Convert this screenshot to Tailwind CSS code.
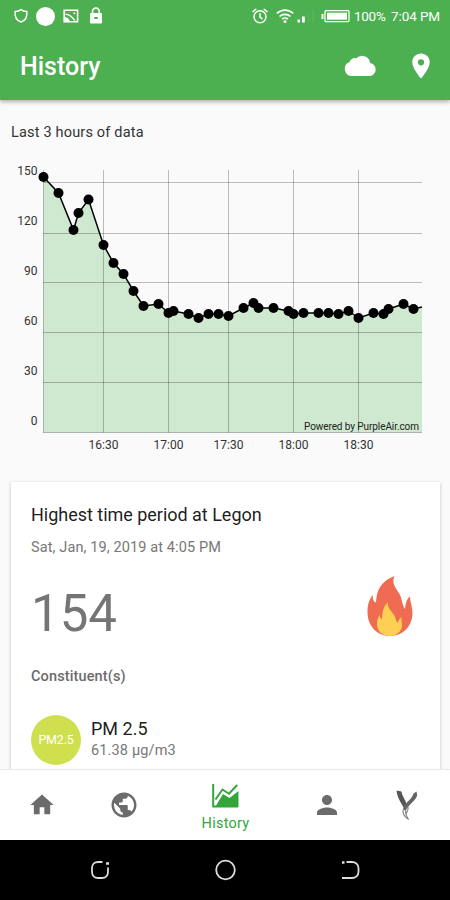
<!DOCTYPE html>
<html lang="en">
<head>
    <meta charset="UTF-8">
    <meta name="viewport" content="width=device-width, initial-scale=1.0">
    <title>History</title>
    <script src="https://cdn.jsdelivr.net/npm/@tailwindcss/browser@4"></script>
</head>
<body class="bg-[#fafafa] font-[Roboto,sans-serif]">
    <div class="flex h-[900px] w-[450px] flex-col overflow-hidden">

        <header class="z-10 h-[100px] shrink-0 bg-[#4caf50] text-white shadow-[0_2px_4px_rgba(0,0,0,0.3)]">
            <!-- Status bar -->
            <div class="flex h-8 items-center justify-between pr-[10px] pl-[13px]">
                <div class="flex items-center">
                    <svg class="h-4 w-4" viewBox="0 0 16 16" fill="none" stroke="currentColor" stroke-width="1.5">
                        <path d="M8 1.500C6.500 3 4.500 3.500 2.200 3.500C1.500 8.500 3.500 12.300 8 14C12.500 12.300 14.500 8.500 13.800 3.500C11.500 3.500 9.500 3 8 1.500Z" />
                    </svg>
                    <span class="ml-[7px] size-[19px] rounded-full bg-white"></span>
                    <svg class="ml-2 h-[14px] w-4" viewBox="0 0 16 14" fill="none" stroke="currentColor" stroke-width="1.6">
                        <path d="M1.200 1.200h13.400v11.500H1.200z" />
                        <path d="M2.500 5.200c4.500 0 7 3 9.300 6.300" />
                        <path d="M2 8c2.500.3 4 1.500 5 4.500H2Z" fill="currentColor" stroke="none" />
                        <circle cx="11.300" cy="4.300" r="1" fill="currentColor" stroke="none" />
                    </svg>
                    <svg class="mt-[-2px] ml-[10px] h-[17px] w-[14px]" viewBox="0 0 14 17">
                        <path d="M3.500 7V4.500a3.400 3.400 0 0 1 6.800 0V7" fill="none" stroke="currentColor" stroke-width="1.600" />
                        <rect x="1" y="6" width="12" height="10.500" rx="1" fill="currentColor" />
                        <rect x="5" y="10" width="4" height="2" rx="1" fill="#4caf50" />
                    </svg>
                </div>
                <div class="flex items-center">
                    <svg class="h-4 w-4" viewBox="0 0 16 16" fill="none" stroke="currentColor" stroke-width="1.500" stroke-linecap="round">
                        <circle cx="8" cy="8.800" r="6" />
                        <path d="M8 5.800v3.300l2 1.500M1 3.600l2.800-2.400M15 3.600l-2.800-2.400" />
                    </svg>
                    <svg class="ml-2 h-4 w-[18px]" viewBox="0 0 18 16" fill="none" stroke="currentColor" stroke-width="1.700">
                        <path d="M.8 5.400a11.800 11.800 0 0 1 16.400 0M3.500 8.500a8 8 0 0 1 11 0M6 11.200a4.400 4.400 0 0 1 6 0" />
                        <circle cx="9" cy="13.500" r="1.500" fill="currentColor" stroke="none" />
                    </svg>
                    <svg class="ml-[3px] h-4 w-[20px]" viewBox="0 0 20 16" fill="currentColor">
                        <rect x="0.500" y="11.500" width="2.500" height="3" />
                        <rect x="5" y="8.500" width="2.800" height="6" />
                        <rect x="10.500" y="5" width="2.500" height="9.500" opacity="0.060" />
                        <rect x="15" y="1.500" width="2.500" height="13" opacity="0.060" />
                    </svg>
                    <svg class="mr-px ml-[4px] h-[14px] w-[29px]" viewBox="0 0 29 14">
                        <rect x="0.500" y="5" width="2" height="5" fill="currentColor" />
                        <rect x="4" y="1.700" width="24" height="11" rx="1" fill="none" stroke="currentColor" stroke-width="1.300" />
                        <rect x="6" y="3.700" width="20" height="7" fill="currentColor" />
                    </svg>
                    <span class="ml-[3px] w-8 text-[13.500px] whitespace-nowrap tracking-[-0.300px]">100%</span>
                    <span class="ml-[5px] text-[13.500px] whitespace-nowrap tracking-[-0.100px]">7:04 PM</span>
                </div>
            </div>
            <!-- Title row -->
            <div class="flex h-[68px] items-center pr-[14px] pl-5">
                <h1 class="mt-0.5 flex-1 text-[25px] font-medium">History</h1>
                <svg class="mr-px h-[34px] w-[34px]" viewBox="0 0 32 32" fill="currentColor">
                    <path d="M8 25.500a6.800 6.800 0 0 1-1.800-13.200 4.800 4.800 0 0 1 6.300-3.600A7.600 7.600 0 0 1 25.500 13.200 6.200 6.200 0 0 1 25.200 25.500Z" />
                </svg>
                <svg class="ml-[28px] h-[30px] w-[30px]" viewBox="0 0 24 24" fill="currentColor">
                    <path d="M12 2C8.130 2 5 5.130 5 9c0 5.250 7 13 7 13s7-7.750 7-13c0-3.870-3.130-7-7-7zm0 9.500a2.500 2.500 0 0 1 0-5 2.500 2.500 0 0 1 0 5z" />
                </svg>
            </div>
        </header>

        <main class="flex-1 overflow-hidden">
            <h2 class="mt-[23px] ml-[11px] h-5 text-[14.500px] leading-5 tracking-[0.180px] text-[#333]">Last 3 hours of data</h2>

            <svg class="mt-[7px] block h-[320px] w-[450px]" viewBox="0 150 450 320" id="chart">
                <g id="area"></g>
                <g stroke="#000" stroke-opacity="0.250" stroke-width="1">
                    <path d="M43.500 170V432.500M103.500 170V432.500M168.500 170V432.500M228.500 170V432.500M293.500 170V432.500M358.500 170V432.500" />
                    <path d="M43 182.500H422M43 233.500H422M43 282.500H422M43 332.500H422M43 382.500H422M43 432.500H422" />
                </g>
                <g id="line"></g>
                <g font-size="12" fill="#333" text-anchor="end">
                    <text x="37.500" y="175">150</text>
                    <text x="37.500" y="225">120</text>
                    <text x="37.500" y="275">90</text>
                    <text x="37.500" y="325">60</text>
                    <text x="37.500" y="375">30</text>
                    <text x="37.500" y="425">0</text>
                </g>
                <g font-size="12" fill="#333" text-anchor="middle">
                    <text x="103.500" y="449">16:30</text>
                    <text x="168.500" y="449">17:00</text>
                    <text x="228.500" y="449">17:30</text>
                    <text x="293.500" y="449">18:00</text>
                    <text x="358.500" y="449">18:30</text>
                </g>
                <text x="304" y="429.500" font-size="10" fill="#222" textLength="115">Powered by PurpleAir.com</text>
            </svg>

            <section class="mr-[10px] ml-[11px] mt-[12px] h-[330px] bg-white px-5 pt-[21px] shadow-[0_1px_3px_rgba(0,0,0,0.250)]">
                <h3 class="text-[18px] leading-6 tracking-[-0.020px] text-black/90">Highest time period at Legon</h3>
                <p class="mt-[11px] text-[14.500px] leading-5 tracking-[0.120px] text-[#777]">Sat, Jan, 19, 2019 at 4:05 PM</p>
                <div class="mt-[18px] flex h-[74px] items-center justify-between">
                    <span class="text-[51px] leading-none text-[#757575]">154</span>
                    <svg class="mt-[-14px] mr-[6px] h-[60px] w-[48px]" viewBox="0 0 48 60">
                        <path fill="#ef6b51" d="M28.500 0C16 5 10.500 13 10 26.500C7 25.500 6.500 22.500 7.200 19C3 23 1.500 29 1.500 36C1.500 50 11 60 24 60C37 60 46.500 50 46.500 37C46.500 31 44 26 44 20.500C40.500 23 39.500 28 39 33C36 29 36.500 24 33.500 18C29 11 25.500 7 28.500 0Z" />
                        <path fill="#fcd053" d="M22 26C17 31 16.500 36 16 43C14 42 13.500 40.500 14 38.500C11.500 42 11 45 11 48C11 55 16 60 24 60C31 60 36 55 36 49C36 46 35 44 35.500 41C33 43 32 45 32 47C29.500 45 30 42 28 39C25 34 21 32 22 26Z" />
                    </svg>
                </div>
                <p class="mt-[17px] text-[14.500px] leading-5 font-medium tracking-[0.130px] text-[#6b6b6b]">Constituent(s)</p>
                <div class="mt-[28px] flex items-center">
                    <span class="flex size-[50px] items-center justify-center rounded-full bg-[#cfdf4e] text-[12.500px] tracking-[-0.200px] text-white">PM2.5</span>
                    <div class="ml-[10px]">
                        <p class="mt-[-2px] text-[18px] leading-6 text-black/90">PM 2.5</p>
                        <p class="text-[14.500px] leading-5 tracking-[0.150px] text-[#777]">61.38 µg/m3</p>
                    </div>
                </div>
            </section>
        </main>

        <!-- Bottom tabs -->
        <nav class="z-10 flex h-[71px] shrink-0 items-center border-t border-[#e8e8e8] bg-white text-[#6b6b6b]">
            <a href="#" class="flex w-[83px] justify-center">
                <svg class="h-7 w-7" viewBox="0 0 24 24" fill="currentColor">
                    <path d="M10 20v-6h4v6h5v-8h3L12 3 2 12h3v8z" />
                </svg>
            </a>
            <a href="#" class="flex w-[82px] justify-center">
                <svg class="h-[30px] w-[30px]" viewBox="0 0 24 24" fill="currentColor">
                    <path d="M12 2C6.480 2 2 6.480 2 12s4.480 10 10 10 10-4.480 10-10S17.520 2 12 2zm-1 17.930c-3.950-.49-7-3.850-7-7.930 0-.62.08-1.210.21-1.790L9 15v1c0 1.100.9 2 2 2v1.930zm6.900-2.540c-.26-.81-1-1.390-1.900-1.390h-1v-3c0-.55-.45-1-1-1H8v-2h2c.55 0 1-.45 1-1V7h2c1.100 0 2-.9 2-2v-.41c2.930 1.190 5 4.060 5 7.410 0 2.080-.8 3.970-2.100 5.390z" />
                </svg>
            </a>
            <a href="#" class="flex w-[121px] flex-col items-center text-[#34a53a]">
                <svg class="mt-[8px] h-6 w-[27px]" viewBox="0 0 27 24">
                    <path d="M1.200 0V22.500H26" fill="none" stroke="currentColor" stroke-width="2" />
                    <path d="M3.500 15.500L10.500 5.500L17 9.800L25.200 1" fill="none" stroke="currentColor" stroke-width="2" />
                    <path d="M3.500 22.500L11 10L17.500 14L26.500 7V23H3.500Z" fill="currentColor" />
                </svg>
                <span class="mt-[6px] text-[14.500px] leading-5 tracking-[0.250px]">History</span>
            </a>
            <a href="#" class="flex w-[81px] justify-center">
                <svg class="h-[30px] w-[30px]" viewBox="0 0 24 24" fill="currentColor">
                    <path d="M12 12c2.210 0 4-1.790 4-4s-1.790-4-4-4-4 1.790-4 4 1.790 4 4 4zm0 2c-2.670 0-8 1.340-8 4v2h16v-2c0-2.660-5.330-4-8-4z" />
                </svg>
            </a>
            <a href="#" class="flex w-[80px] justify-center">
                <svg class="h-[30px] w-[22px]" viewBox="0 0 22 30">
                    <path d="M0.500 0.500L5.500 1.500C6 6 9 9 10.500 14L8 18C4.500 12 1.500 8 0.500 0.500Z" fill="#555" />
                    <path d="M17.500 3.500L20.500 1.500L21.200 5C20.500 10 13 14 9.500 21C8 19 6.500 20 7.500 17.500C10 12 16 9 17.500 3.500Z" fill="#666" />
                    <path d="M7.500 19C6 23 8 26.500 12.500 29.500C10.500 26 9 24 9.800 21M12 17C13 20 10 22 10 25" fill="none" stroke="#888" stroke-width="1.200" />
                </svg>
            </a>
        </nav>

        <!-- System buttons -->
        <div class="flex h-[60px] shrink-0 items-center justify-between bg-black px-[90px] text-[#ddd]">
            <svg class="h-5 w-5" viewBox="0 0 20 20" fill="none" stroke="currentColor" stroke-width="1.800">
                <path d="M12.500 2H8C4.500 2 2 4.500 2 8v4c0 3.500 2.500 6 6 6h4c3.500 0 6-2.500 6-6V7.500" />
                <path d="M16 3.500h3" stroke-width="2.500" />
            </svg>
            <svg class="h-[22px] w-[22px]" viewBox="0 0 22 22" fill="none" stroke="currentColor" stroke-width="1.800">
                <circle cx="11.500" cy="11" r="9.300" />
            </svg>
            <svg class="h-5 w-5" viewBox="0 0 20 20" fill="none" stroke="currentColor" stroke-width="1.800">
                <path d="M6.500 2h5.500C15.500 2 18.500 4.500 18.500 8v4c0 3.500-3 6-6.500 6H2" />
                <path d="M2 2.500h2.500" stroke-width="2.500" />
            </svg>
        </div>
    </div>

    <script>
        // Readings as [x, y] in chart coordinates
        const points = [
            [43.5, 177], [58.5, 193], [73.5, 230], [78.5, 213], [88.5, 199.5], [103.5, 245],
            [113.5, 263], [123.5, 274], [133.5, 291], [143.5, 306], [158.5, 304], [168.5, 313],
            [173.5, 311], [188.5, 314], [198.5, 318], [208.5, 314], [218.5, 314], [228.5, 316],
            [243.5, 308], [253.5, 303], [258.5, 308], [273.5, 308], [288.5, 311], [293.5, 314],
            [303.5, 313], [318.5, 313], [328.5, 313], [338.5, 314], [348.5, 311], [358.5, 318],
            [373.5, 313], [383.5, 314], [388.5, 309], [403.5, 304], [413.5, 309]
        ];
        const line = 'M' + points.map(p => p.join(' ')).join('L') + 'L422 307';

        document.getElementById('area').innerHTML =
            `<path d="${line}V432.5H43.5Z" fill="#cfe8d0" />`;
        document.getElementById('line').innerHTML =
            `<path d="${line}" fill="none" stroke="#000" stroke-width="1.500" />` +
            points.map(p => `<circle cx="${p[0]}" cy="${p[1]}" r="5" />`).join('');
    </script>
</body>
</html>
